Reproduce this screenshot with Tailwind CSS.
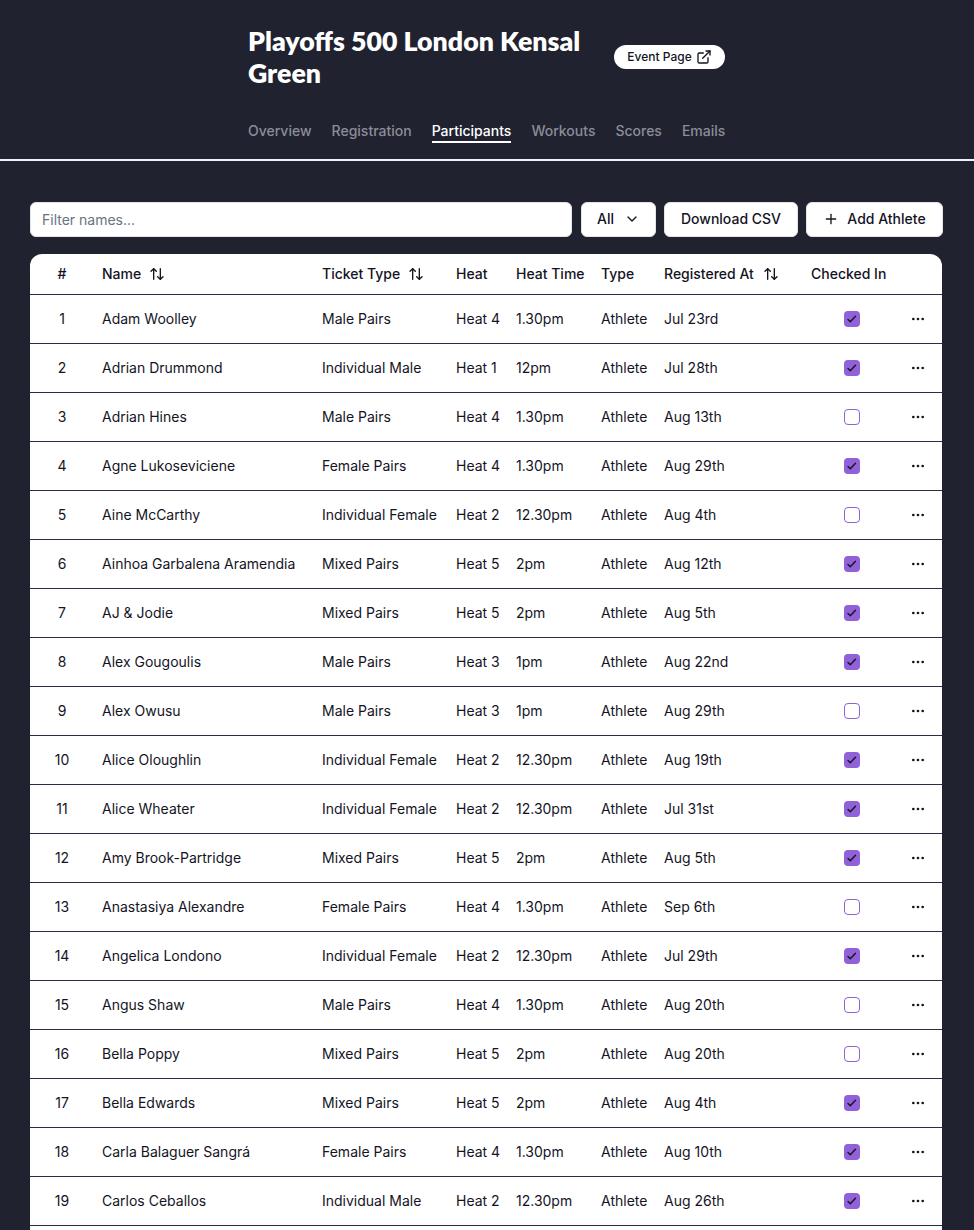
<!DOCTYPE html>
<html lang="en">
<head>
  <meta charset="UTF-8" />
  <meta name="viewport" content="width=device-width, initial-scale=1.0" />
  <title>Participants</title>
  <script src="https://cdn.jsdelivr.net/npm/@tailwindcss/browser@4"></script>
</head>
<body class="bg-[#20222f] h-screen overflow-hidden font-['Inter',sans-serif] text-[#14141f]">
  <header class="h-[161px] border-b-2 border-[#f1f1f3]">
    <div class="w-[477px] ml-[248px] pt-[25px]">
      <div class="flex items-center gap-5">
        <h1 class="w-[346px] shrink-0 text-[26.7px] leading-8 font-extrabold text-white font-['Lato',sans-serif]">Playoffs 500 London Kensal Green</h1>
        <a class="h-6 w-[111px] shrink-0 flex items-center justify-center gap-1 rounded-full bg-white text-xs font-medium">
          Event Page
          <svg class="w-4 h-4" viewBox="0 0 24 24" fill="none" stroke="currentColor" stroke-width="2" stroke-linecap="round" stroke-linejoin="round"><path d="M15 3h6v6"/><path d="M10 14 21 3"/><path d="M18 13v6a2 2 0 0 1-2 2H5a2 2 0 0 1-2-2V8a2 2 0 0 1 2-2h6"/></svg>
        </a>
      </div>
      <nav class="mt-8 flex gap-5 text-sm font-medium text-[#8b8d99]">
        <a class="h-[22px] leading-5">Overview</a>
        <a class="h-[22px] leading-5">Registration</a>
        <a class="h-[22px] leading-5 text-white border-b-2 border-white">Participants</a>
        <a class="h-[22px] leading-5">Workouts</a>
        <a class="h-[22px] leading-5">Scores</a>
        <a class="h-[22px] leading-5">Emails</a>
      </nav>
    </div>
  </header>

  <main class="pl-[30px] pr-8 pt-[41px]">
    <div class="flex gap-2 h-[35px] mb-[17px] text-sm font-medium">
      <input placeholder="Filter names..." class="flex-1 min-w-0 mr-px bg-white border border-[#e4e4e7] rounded-md pl-[11px] pr-3 text-sm font-normal placeholder:text-[#6b7280]" />
      <button class="w-[75px] pb-px bg-white border border-[#e4e4e7] rounded-md flex items-center justify-center gap-2.5">
        All
        <svg class="w-4 h-4" viewBox="0 0 24 24" fill="none" stroke="currentColor" stroke-width="2" stroke-linecap="round" stroke-linejoin="round"><path d="m6 9 6 6 6-6"/></svg>
      </button>
      <button class="w-[134px] pb-px bg-white border border-[#e4e4e7] rounded-md">Download CSV</button>
      <button class="w-[137px] -mr-px pb-px bg-white border border-[#e4e4e7] rounded-md flex items-center justify-center gap-2">
        <svg class="w-4 h-4" viewBox="0 0 24 24" fill="none" stroke="currentColor" stroke-width="2" stroke-linecap="round"><path d="M5 12h14"/><path d="M12 5v14"/></svg>
        Add Athlete
      </button>
    </div>

    <div class="bg-white rounded-t-xl">
      <table class="w-full table-fixed border-separate border-spacing-0 text-sm">
        <colgroup>
          <col class="w-[64px]" /><col class="w-[220px]" /><col class="w-[134px]" /><col class="w-[60px]" />
          <col class="w-[85px]" /><col class="w-[63px]" /><col class="w-[147px]" /><col class="w-[98px]" /><col />
        </colgroup>
        <thead>
          <tr class="h-[41px] font-medium text-left">
            <th class="border-b border-[#2b2b45] font-medium text-center">#</th>
            <th class="border-b border-[#2b2b45] font-medium px-2"><span class="flex items-center gap-2">Name <svg class="w-4 h-4" viewBox="0 0 24 24" fill="none" stroke="currentColor" stroke-width="2" stroke-linecap="round" stroke-linejoin="round"><path d="m21 16-4 4-4-4"/><path d="M17 20V4"/><path d="m3 8 4-4 4 4"/><path d="M7 4v16"/></svg></span></th>
            <th class="border-b border-[#2b2b45] font-medium px-2"><span class="flex items-center gap-2">Ticket Type <svg class="w-4 h-4" viewBox="0 0 24 24" fill="none" stroke="currentColor" stroke-width="2" stroke-linecap="round" stroke-linejoin="round"><path d="m21 16-4 4-4-4"/><path d="M17 20V4"/><path d="m3 8 4-4 4 4"/><path d="M7 4v16"/></svg></span></th>
            <th class="border-b border-[#2b2b45] font-medium px-2">Heat</th>
            <th class="border-b border-[#2b2b45] font-medium px-2 whitespace-nowrap">Heat Time</th>
            <th class="border-b border-[#2b2b45] font-medium px-2">Type</th>
            <th class="border-b border-[#2b2b45] font-medium px-2"><span class="flex items-center gap-[9px]">Registered At <svg class="w-4 h-4" viewBox="0 0 24 24" fill="none" stroke="currentColor" stroke-width="2" stroke-linecap="round" stroke-linejoin="round"><path d="m21 16-4 4-4-4"/><path d="M17 20V4"/><path d="m3 8 4-4 4 4"/><path d="M7 4v16"/></svg></span></th>
            <th class="border-b border-[#2b2b45] font-medium px-2 whitespace-nowrap">Checked In</th>
            <th class="border-b border-[#2b2b45]"></th>
          </tr>
        </thead>
        <tbody id="rows"></tbody>
      </table>
    </div>
  </main>

  <script>
    const athletes = [
      ["Adam Woolley", "Male Pairs", "Heat 4", "1.30pm", "Jul 23rd", true],
      ["Adrian Drummond", "Individual Male", "Heat 1", "12pm", "Jul 28th", true],
      ["Adrian Hines", "Male Pairs", "Heat 4", "1.30pm", "Aug 13th", false],
      ["Agne Lukoseviciene", "Female Pairs", "Heat 4", "1.30pm", "Aug 29th", true],
      ["Aine McCarthy", "Individual Female", "Heat 2", "12.30pm", "Aug 4th", false],
      ["Ainhoa Garbalena Aramendia", "Mixed Pairs", "Heat 5", "2pm", "Aug 12th", true],
      ["AJ & Jodie", "Mixed Pairs", "Heat 5", "2pm", "Aug 5th", true],
      ["Alex Gougoulis", "Male Pairs", "Heat 3", "1pm", "Aug 22nd", true],
      ["Alex Owusu", "Male Pairs", "Heat 3", "1pm", "Aug 29th", false],
      ["Alice Oloughlin", "Individual Female", "Heat 2", "12.30pm", "Aug 19th", true],
      ["Alice Wheater", "Individual Female", "Heat 2", "12.30pm", "Jul 31st", true],
      ["Amy Brook-Partridge", "Mixed Pairs", "Heat 5", "2pm", "Aug 5th", true],
      ["Anastasiya Alexandre", "Female Pairs", "Heat 4", "1.30pm", "Sep 6th", false],
      ["Angelica Londono", "Individual Female", "Heat 2", "12.30pm", "Jul 29th", true],
      ["Angus Shaw", "Male Pairs", "Heat 4", "1.30pm", "Aug 20th", false],
      ["Bella Poppy", "Mixed Pairs", "Heat 5", "2pm", "Aug 20th", false],
      ["Bella Edwards", "Mixed Pairs", "Heat 5", "2pm", "Aug 4th", true],
      ["Carla Balaguer Sangrá", "Female Pairs", "Heat 4", "1.30pm", "Aug 10th", true],
      ["Carlos Ceballos", "Individual Male", "Heat 2", "12.30pm", "Aug 26th", true]
    ];

    const cell = "border-b border-[#2b2b45] px-2 whitespace-nowrap";
    const checked = `<span class="block mx-auto w-4 h-4 rounded bg-[#9061d8] text-[#14141f]"><svg class="w-4 h-4" viewBox="0 0 16 16" fill="none" stroke="currentColor" stroke-width="1.4" stroke-linecap="round" stroke-linejoin="round"><path d="m4 8.5 2.3 2.3 5.2-5.6"/></svg></span>`;
    const unchecked = `<span class="block mx-auto w-4 h-4 rounded border border-[#9061d8] bg-white"></span>`;
    const dots = `<svg class="w-4 h-4 mr-4 ml-auto" viewBox="0 0 24 24" fill="currentColor" stroke="currentColor" stroke-width="2"><circle cx="5" cy="12" r="1"/><circle cx="12" cy="12" r="1"/><circle cx="19" cy="12" r="1"/></svg>`;

    document.getElementById("rows").innerHTML = athletes.map((a, i) => `
      <tr class="h-[49px]">
        <td class="border-b border-[#2b2b45] text-center">${i + 1}</td>
        <td class="${cell}">${a[0].replace("&", "&amp;")}</td>
        <td class="${cell}">${a[1]}</td>
        <td class="${cell}">${a[2]}</td>
        <td class="${cell}">${a[3]}</td>
        <td class="${cell}">Athlete</td>
        <td class="${cell}">${a[4]}</td>
        <td class="border-b border-[#2b2b45]">${a[5] ? checked : unchecked}</td>
        <td class="border-b border-[#2b2b45]">${dots}</td>
      </tr>`).join("") + `<tr class="h-[49px]"><td colspan="9"></td></tr>`;
  </script>
</body>
</html>
